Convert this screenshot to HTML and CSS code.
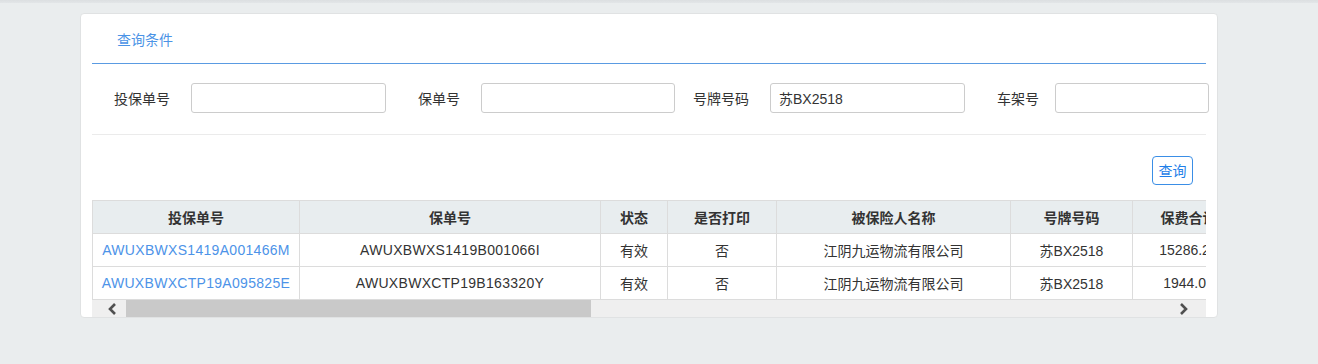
FILE: index.html
```html
<!DOCTYPE html>
<html lang="zh-CN">
<head>
<meta charset="utf-8">
<title>查询</title>
<link rel="stylesheet" href="styles.css">
</head>
<body>
<div class="topbar"></div>
<div class="page">
  <div class="card">
    <div class="tabs">
      <span class="tab">查询条件</span>
    </div>
    <div class="form">
      <label class="lbl">投保单号</label>
      <input class="inp" type="text">
      <label class="lbl">保单号</label>
      <input class="inp" type="text">
      <label class="lbl">号牌号码</label>
      <input class="inp" type="text" value="苏BX2518">
      <label class="lbl lbl-last">车架号</label>
      <input class="inp" type="text">
    </div>
    <div class="actions">
      <button class="btn" type="button">查询</button>
    </div>
    <div class="grid-wrap">
      <div class="grid-clip">
        <table class="grid">
          <colgroup>
            <col class="c1"><col class="c2"><col class="c3"><col class="c4"><col class="c5"><col class="c6"><col class="c7">
          </colgroup>
          <thead>
            <tr><th>投保单号</th><th>保单号</th><th>状态</th><th>是否打印</th><th>被保险人名称</th><th>号牌号码</th><th>保费合计</th></tr>
          </thead>
          <tbody>
            <tr><td class="code"><a class="link">AWUXBWXS1419A001466M</a></td><td class="code">AWUXBWXS1419B001066I</td><td>有效</td><td>否</td><td>江阴九运物流有限公司</td><td>苏BX2518</td><td>15286.26</td></tr>
            <tr><td class="code"><a class="link">AWUXBWXCTP19A095825E</a></td><td class="code">AWUXBWXCTP19B163320Y</td><td>有效</td><td>否</td><td>江阴九运物流有限公司</td><td>苏BX2518</td><td>1944.00</td></tr>
          </tbody>
        </table>
      </div>
      <div class="hscroll">
        <span class="arrow arrow-left"><svg width="11" height="12" viewBox="0 0 11 12"><path d="M8 1 L3 6 L8 11" fill="none" stroke="#505050" stroke-width="2.6"/></svg></span>
        <div class="track"><div class="thumb"></div></div>
        <span class="arrow arrow-right"><svg width="11" height="12" viewBox="0 0 11 12"><path d="M3 1 L8 6 L3 11" fill="none" stroke="#505050" stroke-width="2.6"/></svg></span>
      </div>
    </div>
  </div>
</div>
</body>
</html>
```

FILE: styles.css
```css
* { box-sizing: border-box; }
html, body { margin: 0; padding: 0; }
body {
  background: #eaedee;
  font-family: "Liberation Sans", "Noto Sans CJK SC", sans-serif;
  font-size: 14px;
  color: #333;
  height: 364px;
  overflow: hidden;
}
.topbar {
  height: 3px;
  background: linear-gradient(#dcdfe1, #e3e6e8);
}
.page {
  padding: 10px 0 0 80px;
}
.card {
  width: 1138px;
  height: 305px;
  background: #fff;
  border: 1px solid #e0e2e3;
  border-radius: 4px;
  padding: 0 11px;
}
.tabs {
  height: 50px;
  border-bottom: 1px solid #5a9be2;
  padding-left: 25px;
  display: flex;
  align-items: center;
  padding-top: 3px;
}
.tab {
  color: #4b93e6;
  font-size: 14px;
  line-height: 20px;
}
.form {
  display: grid;
  grid-template-columns: 99px 195px 95px 194px 95px 195px 90px 154px;
  align-items: center;
  height: 71px;
  border-bottom: 1px solid #ebebeb;
  padding-bottom: 2px;
}
.lbl {
  text-align: right;
  padding-right: 21px;
  color: #333;
  font-size: 14px;
}
.lbl-last { padding-right: 16px; }
.inp {
  height: 30px;
  border: 1px solid #cccccc;
  border-radius: 3px;
  font: 14px "Liberation Sans", "Noto Sans CJK SC", sans-serif;
  color: #333;
  padding: 0 8px;
  outline: none;
  width: 100%;
}
.actions {
  display: flex;
  justify-content: flex-end;
  padding: 21px 13px 15px 0;
}
.btn {
  width: 41px;
  height: 29px;
  border: 1px solid #3a8ee6;
  border-radius: 4px;
  background: #fff;
  color: #1f7fe8;
  font: 14px "Noto Sans CJK SC", sans-serif;
  padding: 0;
  line-height: 27px;
}
.grid-wrap {
  width: 1114px;
}
.grid-clip {
  overflow: hidden;
  width: 1114px;
}
.grid {
  border-collapse: collapse;
  table-layout: fixed;
  width: 1152px;
}
.c1 { width: 207px; }
.c2 { width: 301px; }
.c3 { width: 67px; }
.c4 { width: 109px; }
.c5 { width: 234px; }
.c6 { width: 122px; }
.c7 { width: 112px; }
.grid th, .grid td {
  border: 1px solid #dcdcdc;
  height: 33px;
  text-align: center;
  white-space: nowrap;
  overflow: hidden;
  padding: 0 4px;
  font-size: 14px;
}
.grid th {
  background: #e8edef;
  font-weight: bold;
  color: #333;
}
.grid td { color: #333; }
.grid td.code { letter-spacing: 0.3px; }
.link { color: #4d93e8; text-decoration: none; }
.hscroll {
  display: flex;
  align-items: center;
  height: 17px;
  background: #efefef;
}
.arrow {
  width: 34px;
  height: 17px;
  display: flex;
  align-items: center;
}
.arrow-left { justify-content: flex-end; padding-right: 8px; }
.arrow-right { justify-content: flex-start; padding-left: 7px; margin-right: 1px; }
.track { flex: 1; height: 17px; }
.thumb {
  width: 465px;
  height: 17px;
  background: #c9c9c9;
}
```
